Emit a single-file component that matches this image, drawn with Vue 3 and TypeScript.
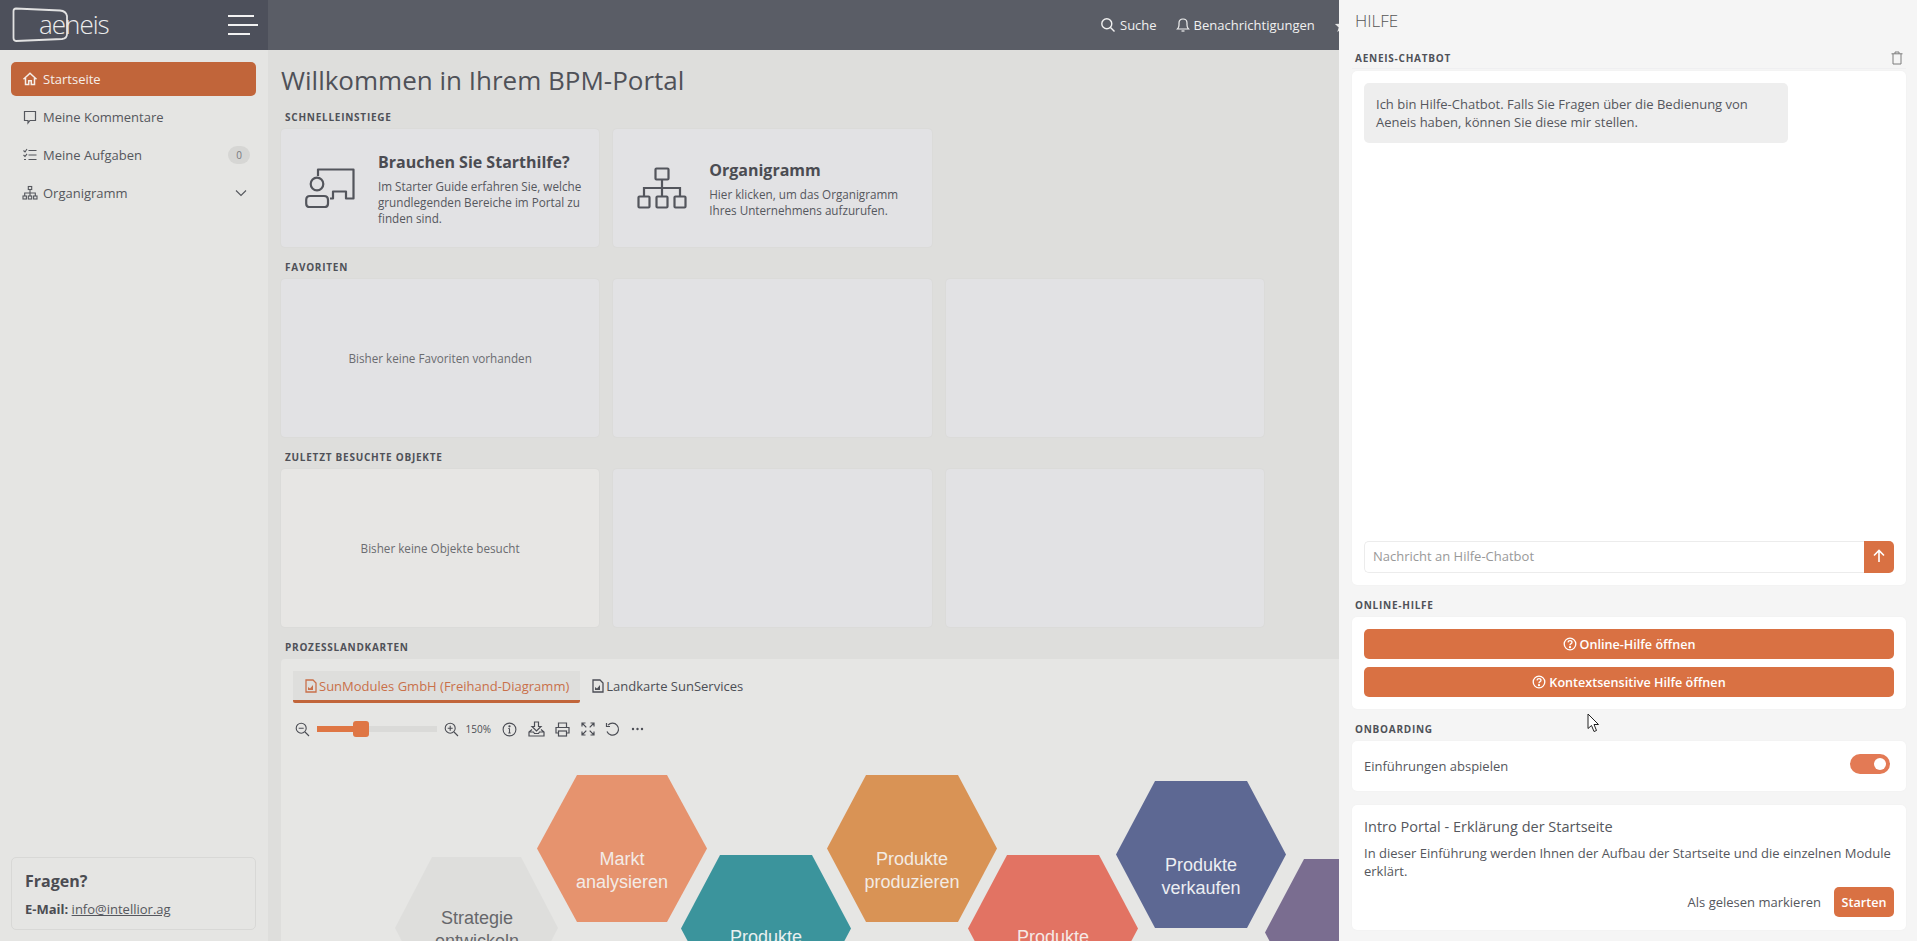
<template>
  <div class="app">
    <header class="topbar">
      <div class="brand">
        <div class="logo">
          <svg class="logo-frame" width="58" height="36" viewBox="0 0 58 36" fill="none">
            <path d="M4 1.5 L48 3.5 Q54 4 55 9 V27 Q55 31.5 50 32 L4 34 Q1.5 34 1.5 31 V4 Q1.5 1.5 4 1.5 Z" stroke="#e2e2e2" stroke-width="1.8" />
          </svg>
          <span class="logo-text">aeneis</span>
        </div>
        <div class="burger"><i class="b1"></i><i class="b2"></i><i class="b3"></i></div>
      </div>
      <nav class="topnav">
        <span class="nav-item">
          <svg width="16" height="16" viewBox="0 0 16 16" fill="none" stroke="#f0f0f0" stroke-width="1.4"><circle cx="6.8" cy="6.8" r="5" /><path d="M10.5 10.5 L14.5 14.5" /></svg>
          Suche
        </span>
        <span class="nav-item">
          <svg width="14" height="16" viewBox="0 0 14 16" fill="none" stroke="#f0f0f0" stroke-width="1.2"><path d="M1.5 12 Q3 10.5 3 8 V6 Q3 2 7 2 Q11 2 11 6 V8 Q11 10.5 12.5 12 Z" /><path d="M5.5 14 H8.5" /></svg>
          Benachrichtigungen
        </span>
        <span class="nav-item">
          <svg width="15" height="15" viewBox="0 0 16 16" fill="#e6e6e6"><path d="M8 1 L10 6 L15 6.5 L11 10 L12.5 15 L8 12 L3.5 15 L5 10 L1 6.5 L6 6 Z" /></svg>
        </span>
      </nav>
    </header>

    <aside class="sidebar">
      <ul class="menu">
        <li class="menu-item active">
          <svg width="16" height="16" viewBox="0 0 16 16" fill="none" stroke="currentColor" stroke-width="1.5"><path d="M1.5 8.2 L8 2.2 L14.5 8.2" /><path d="M3.5 7 V13.5 H6.7 V9.8 H9.3 V13.5 H12.5 V7" /></svg>
          <span>Startseite</span>
        </li>
        <li class="menu-item">
          <svg width="16" height="16" viewBox="0 0 16 16" fill="none" stroke="currentColor" stroke-width="1.2"><path d="M2.5 2.5 H13.5 V11.5 H8 L6 14 V11.5 H2.5 Z" /></svg>
          <span>Meine Kommentare</span>
        </li>
        <li class="menu-item">
          <svg width="16" height="16" viewBox="0 0 16 16" fill="none" stroke="currentColor" stroke-width="1.1"><path d="M1.5 3.5 L3 5 L5 2 M1.5 8 L3 9.5 L5 6.8 M2 12.5 H4 M6.5 3.5 H14.5 M6.5 8 H14.5 M6.5 12.5 H14.5" /></svg>
          <span>Meine Aufgaben</span>
          <em class="count">0</em>
        </li>
        <li class="menu-item">
          <svg width="16" height="16" viewBox="0 0 16 16" fill="none" stroke="currentColor" stroke-width="1.1"><rect x="6.3" y="1.5" width="3.4" height="3" /><rect x="1" y="11" width="3.4" height="3" /><rect x="6.3" y="11" width="3.4" height="3" /><rect x="11.6" y="11" width="3.4" height="3" /><path d="M8 4.5 V11 M2.7 11 V8 H13.3 V11" /></svg>
          <span>Organigramm</span>
          <svg class="chevron" width="12" height="12" viewBox="0 0 12 12" fill="none" stroke="currentColor" stroke-width="1.1"><path d="M1 3.5 L6 8.5 L11 3.5" /></svg>
        </li>
      </ul>
      <div class="questions">
        <h4>Fragen?</h4>
        <p><b>E-Mail:</b> <a>info@intellior.ag</a></p>
      </div>
    </aside>

    <main class="main">
      <h1>Willkommen in Ihrem BPM-Portal</h1>

      <section>
        <h5 class="label">SCHNELLEINSTIEGE</h5>
        <div class="tiles quick">
          <div class="tile quick-tile">
            <svg class="quick-icon" width="50" height="40" viewBox="0 0 50 40" fill="none" stroke="#53555c" stroke-width="2.2" stroke-linejoin="round">
              <path d="M13 8 V1.5 H48.5 V30.5 H41 V23.5 H28 V30.5 H25" />
              <circle cx="12" cy="16" r="6.3" />
              <path d="M4 39 Q1.2 39 1.2 35.5 V32 Q1.2 28 5 28 H19 Q23 28 23 32 V35.5 Q23 39 20 39 Z" />
            </svg>
            <div class="quick-text">
              <h3>Brauchen Sie Starthilfe?</h3>
              <p>Im Starter Guide erfahren Sie, welche grundlegenden Bereiche im Portal zu finden sind.</p>
            </div>
          </div>
          <div class="tile quick-tile org">
            <svg class="quick-icon" width="50" height="42" viewBox="0 0 50 42" fill="none" stroke="#53555c" stroke-width="2.2">
              <rect x="18.5" y="1.5" width="13" height="11" rx="1" />
              <rect x="1.5" y="29.5" width="11" height="11" rx="1" />
              <rect x="19.5" y="29.5" width="11" height="11" rx="1" />
              <rect x="37.5" y="29.5" width="11" height="11" rx="1" />
              <path d="M25 12.5 V29.5 M7 29.5 V21 H43 V29.5" />
            </svg>
            <div class="quick-text">
              <h3>Organigramm</h3>
              <p>Hier klicken, um das Organigramm Ihres Unternehmens aufzurufen.</p>
            </div>
          </div>
        </div>
      </section>

      <section>
        <h5 class="label">FAVORITEN</h5>
        <div class="tiles">
          <div class="tile big">Bisher keine Favoriten vorhanden</div>
          <div class="tile big"></div>
          <div class="tile big"></div>
        </div>
      </section>

      <section>
        <h5 class="label">ZULETZT BESUCHTE OBJEKTE</h5>
        <div class="tiles">
          <div class="tile big warm">Bisher keine Objekte besucht</div>
          <div class="tile big"></div>
          <div class="tile big"></div>
        </div>
      </section>

      <section>
        <h5 class="label tight">PROZESSLANDKARTEN</h5>
        <div class="maps">
          <div class="tabs">
            <div class="tab selected">
              <svg width="12" height="14" viewBox="0 0 12 14" fill="none" stroke="currentColor" stroke-width="1.3"><path d="M1 1 H8 L11 4 V13 H1 Z" /><path d="M3 11 V8 L5 9.5 L8 6 V11 Z" fill="currentColor" stroke="none" /></svg>
              SunModules GmbH (Freihand-Diagramm)
            </div>
            <div class="tab">
              <svg width="12" height="14" viewBox="0 0 12 14" fill="none" stroke="currentColor" stroke-width="1.3"><path d="M1 1 H8 L11 4 V13 H1 Z" /><path d="M3 11 V8 L5 9.5 L8 6 V11 Z" fill="currentColor" stroke="none" /></svg>
              Landkarte SunServices
            </div>
          </div>
          <div class="toolbar">
            <svg width="15" height="15" viewBox="0 0 15 15" fill="none" stroke="#4c4e55" stroke-width="1.1"><circle cx="6.2" cy="6.2" r="5" /><path d="M10 10 L14 14 M3.7 6.2 H8.7" /></svg>
            <div class="slider"><div class="slider-fill" :style="{ width: zoomPercent + '%' }"></div><div class="slider-thumb"></div></div>
            <svg width="15" height="15" viewBox="0 0 15 15" fill="none" stroke="#4c4e55" stroke-width="1.1"><circle cx="6.2" cy="6.2" r="5" /><path d="M10 10 L14 14 M3.7 6.2 H8.7 M6.2 3.7 V8.7" /></svg>
            <span class="zoom-value">150%</span>
            <svg width="15" height="15" viewBox="0 0 15 15" fill="none" stroke="#4c4e55" stroke-width="1.1"><circle cx="7.5" cy="7.5" r="6.4" /><path d="M7.5 6.5 V11 M6.3 11 H8.7 M6.3 6.5 H7.5" /><circle cx="7.5" cy="4.3" r=".6" fill="#4c4e55" /></svg>
            <svg width="17" height="16" viewBox="0 0 17 16" fill="none" stroke="#4c4e55" stroke-width="1.2"><path d="M6.5 1 H10.5 V5.5 H13 L8.5 10 L4 5.5 H6.5 Z" /><path d="M4 8.5 L1 11 V15 H16 V11 L13 8.5 M1 11 H5.5 L6.5 12.5 H10.5 L11.5 11 H16" /></svg>
            <svg width="15" height="15" viewBox="0 0 15 15" fill="none" stroke="#4c4e55" stroke-width="1.2"><path d="M3.5 5.5 V1 H11.5 V5.5 M3.5 11 H1 V5.5 H14 V11 H11.5" /><rect x="3.5" y="9" width="8" height="5" /></svg>
            <svg width="14" height="14" viewBox="0 0 14 14" fill="none" stroke="#4c4e55" stroke-width="1.2"><path d="M1 1 L5.3 5.3 M13 1 L8.7 5.3 M1 13 L5.3 8.7 M13 13 L8.7 8.7 M1 4.5 V1 H4.5 M9.5 1 H13 V4.5 M1 9.5 V13 H4.5 M9.5 13 H13 V9.5" /></svg>
            <svg width="15" height="15" viewBox="0 0 15 15" fill="none" stroke="#4c4e55" stroke-width="1.2"><path d="M3 3.2 A6 6 0 1 1 2 9.5" /><path d="M1.5 1 V4.5 H5" /></svg>
            <svg width="13" height="4" viewBox="0 0 13 4" fill="#4c4e55"><circle cx="2" cy="2" r="1.2" /><circle cx="6.5" cy="2" r="1.2" /><circle cx="11" cy="2" r="1.2" /></svg>
          </div>
          <svg class="map" viewBox="282 745 1500 196" width="1500" height="196">
            <g v-for="hex in hexagons" :key="hex.cx + '-' + hex.top">
              <polygon :points="hexPoints(hex)" :fill="hex.fill" />
              <text
                v-for="(line, i) in hex.lines"
                :key="line"
                :x="hex.cx"
                :y="hex.textY + i * 22.5"
                :fill="hex.ink"
                text-anchor="middle"
                class="map-text"
              >{{ line }}</text>
            </g>
          </svg>
        </div>
      </section>
    </main>

    <aside class="help">
      <h2>HILFE</h2>
      <div class="help-head">
        <h5 class="label">AENEIS-CHATBOT</h5>
        <svg width="12" height="14" viewBox="0 0 12 14" fill="none" stroke="#7d7d7d" stroke-width="1"><path d="M.5 2.8 H11.5 M2 2.8 V13 H10 V2.8 M4 2.8 V1 H8 V2.8" /></svg>
      </div>
      <div class="help-card chat">
        <div class="bubble">Ich bin Hilfe-Chatbot. Falls Sie Fragen über die Bedienung von Aeneis haben, können Sie diese mir stellen.</div>
        <div class="chat-input">
          <span class="placeholder">Nachricht an Hilfe-Chatbot</span>
          <button class="send">
            <svg width="14" height="14" viewBox="0 0 14 14" fill="none" stroke="#fff" stroke-width="1.6"><path d="M7 13 V1.5 M2 6.5 L7 1.5 L12 6.5" /></svg>
          </button>
        </div>
      </div>

      <h5 class="label help-label">ONLINE-HILFE</h5>
      <div class="help-card links">
        <button v-for="link in helpLinks" :key="link" class="wide-btn">
          <svg width="14" height="14" viewBox="0 0 14 14" fill="none" stroke="#fff" stroke-width="1.3"><circle cx="7" cy="7" r="5.8" /><path d="M5 5.4 Q5.2 3.6 7 3.6 Q9 3.6 9 5.2 Q9 6.3 7.8 6.8 Q7 7.2 7 8.3" /><circle cx="7" cy="10.2" r=".5" fill="#fff" /></svg>
          {{ link }}
        </button>
      </div>

      <h5 class="label help-label">ONBOARDING</h5>
      <div class="help-card toggle-row">
        <span>Einführungen abspielen</span>
        <div class="toggle"><i></i></div>
      </div>
      <div class="help-card intro">
        <h4>Intro Portal - Erklärung der Startseite</h4>
        <p>In dieser Einführung werden Ihnen der Aufbau der Startseite und die einzelnen Module erklärt.</p>
        <div class="intro-actions">
          <span>Als gelesen markieren</span>
          <button class="start">Starten</button>
        </div>
      </div>
    </aside>

    <svg class="cursor" width="13" height="20" viewBox="0 0 13 20"><path d="M1 1 V15.5 L4.5 12.5 L7 18.5 L9.5 17.5 L7 11.5 H11.5 Z" fill="#fff" stroke="#222" stroke-width="1" /></svg>
  </div>
</template>

<script setup lang="ts">
interface Hexagon {
  left: number
  right: number
  inset: number
  top: number
  height: number
  fill: string
  ink: string
  cx: number
  textY: number
  lines: string[]
}

const zoomPercent = 37

const helpLinks = ['Online-Hilfe öffnen', 'Kontextsensitive Hilfe öffnen']

const hexagons: Hexagon[] = [
  { left: 396, right: 559, inset: 37, top: 857, height: 142, fill: '#dededc', ink: '#66676b', cx: 478, textY: 924, lines: ['Strategie', 'entwickeln'] },
  { left: 538, right: 708, inset: 40, top: 775, height: 147, fill: '#e6936e', ink: '#f3ebe6', cx: 623, textY: 865, lines: ['Markt', 'analysieren'] },
  { left: 682, right: 852, inset: 39, top: 855, height: 147, fill: '#3b949c', ink: '#e9f0f0', cx: 767, textY: 943, lines: ['Produkte'] },
  { left: 828, right: 998, inset: 39, top: 775, height: 147, fill: '#d99355', ink: '#f3ebe3', cx: 913, textY: 865, lines: ['Produkte', 'produzieren'] },
  { left: 969, right: 1139, inset: 39, top: 855, height: 147, fill: '#e27363', ink: '#f5e9e6', cx: 1054, textY: 943, lines: ['Produkte'] },
  { left: 1117, right: 1287, inset: 39, top: 781, height: 147, fill: '#5d6893', ink: '#eceef2', cx: 1202, textY: 871, lines: ['Produkte', 'verkaufen'] },
  { left: 1266, right: 1436, inset: 39, top: 859, height: 147, fill: '#7a6d90', ink: '#eceef2', cx: 1351, textY: 950, lines: [] },
]

function hexPoints(h: Hexagon): string {
  const mid = h.top + h.height / 2
  return [
    [h.left + h.inset, h.top],
    [h.right - h.inset, h.top],
    [h.right, mid],
    [h.right - h.inset, h.top + h.height],
    [h.left + h.inset, h.top + h.height],
    [h.left, mid],
  ].map((p) => p.join(',')).join(' ')
}
</script>

<style>
html,
body {
  margin: 0;
  overflow: hidden;
}
</style>

<style scoped>
.app {
  position: relative;
  display: grid;
  grid-template-columns: 268px 1fr;
  grid-template-rows: 50px 1fr;
  height: 941px;
  overflow: hidden;
  font-family: "Open Sans", "Liberation Sans", sans-serif;
  font-size: 13px;
  color: #55575d;
  background: #dededc;
}

.topbar {
  grid-column: 1 / 3;
  display: flex;
  justify-content: space-between;
  background: #5a5d66;
  color: #f0f0f0;
}

.brand {
  display: flex;
  justify-content: space-between;
  align-items: center;
  width: 268px;
  padding: 0 10px 0 12px;
  box-sizing: border-box;
  background: #4d505b;
}

.logo {
  position: relative;
  width: 100px;
  height: 40px;
}

.logo-frame {
  position: absolute;
  left: 0;
  top: 2px;
}

.logo-text {
  position: absolute;
  left: 27px;
  top: 3px;
  font-size: 26px;
  line-height: 32px;
  font-weight: 300;
  letter-spacing: -1px;
  color: #ececec;
}

.burger {
  display: flex;
  flex-direction: column;
  gap: 7px;
  width: 30px;
}

.burger i {
  display: block;
  height: 2px;
  background: #f2f2f2;
}

.b1 { width: 26px; }
.b2 { width: 30px; }
.b3 { width: 22px; }

.topnav {
  position: absolute;
  left: 1100px;
  top: 0;
  display: flex;
  align-items: center;
  gap: 19px;
  height: 50px;
  white-space: nowrap;
}

.nav-item {
  display: flex;
  align-items: center;
  gap: 4px;
}

.sidebar {
  display: flex;
  flex-direction: column;
  justify-content: space-between;
  padding: 12px 12px 11px 11px;
  box-sizing: border-box;
  background: #e5e5e3;
  height: 891px;
}

.menu {
  display: flex;
  flex-direction: column;
  gap: 4px;
  margin: 0;
  padding: 0;
  list-style: none;
}

.menu-item {
  display: flex;
  align-items: center;
  gap: 5px;
  height: 34px;
  padding: 0 6px 0 11px;
  border-radius: 5px;
  color: #55575d;
}

.menu-item.active {
  background: #c1653a;
  color: #f5eee9;
}

.count {
  margin-left: auto;
  width: 22px;
  height: 18px;
  border-radius: 9px;
  background: #d6d6d4;
  font-size: 10px;
  font-style: normal;
  line-height: 18px;
  text-align: center;
  color: #77787c;
}

.chevron {
  margin-left: auto;
  margin-right: 3px;
}

.questions {
  width: 245px;
  height: 73px;
  padding: 12px 13px 0;
  box-sizing: border-box;
  border: 1px solid #d8d8d6;
  border-radius: 5px;
}

.questions h4 {
  margin: 0 0 8px;
  font-size: 16px;
  line-height: 22px;
  font-weight: 700;
  color: #4b4c52;
}

.questions p {
  margin: 0;
  line-height: 18px;
}

.questions b {
  color: #4b4c52;
}

.questions a {
  text-decoration: underline;
}

.main {
  height: 891px;
  padding: 11px 13px 0;
  box-sizing: border-box;
  overflow: hidden;
}

h1 {
  margin: 0 0 11px;
  font-size: 26px;
  line-height: 38px;
  font-weight: 400;
  color: #4f5158;
}

section {
  margin-bottom: 13px;
}

.label {
  margin: 0 0 5px 4px;
  font-size: 10px;
  line-height: 14px;
  font-weight: 700;
  letter-spacing: 0.75px;
  color: #4f5158;
}

.tiles {
  display: grid;
  grid-template-columns: repeat(3, 318.25px);
  gap: 14px;
}

.tile {
  border-radius: 4px;
  background: #e2e2e4;
  box-shadow: 0 0 2px rgba(0, 0, 0, 0.06);
}

.big {
  display: flex;
  align-items: center;
  justify-content: center;
  height: 158px;
  font-size: 11.7px;
  color: #6b6c70;
}

.warm {
  background: #e7e6e4;
}

.quick {
  grid-template-columns: 318.25px 318.25px;
}

.quick-tile {
  display: flex;
  align-items: center;
  gap: 23px;
  height: 118px;
  padding: 0 12px 0 24px;
  box-sizing: border-box;
  line-height: 16px;
}

.quick-tile.org {
  gap: 22px;
}

.quick-text {
  width: 207px;
}

.quick-tile h3 {
  margin: 0 0 4px;
  font-size: 16px;
  line-height: 24px;
  font-weight: 700;
  color: #4b4c52;
}

.quick-tile p {
  margin: 0;
  font-size: 11.7px;
  line-height: 16px;
}

.quick-icon {
  flex: none;
}

.maps {
  padding-top: 12px;
  height: 300px;
  border-radius: 4px;
  background: #e6e6e4;
  overflow: hidden;
}

.tabs {
  display: flex;
  gap: 9px;
  padding-left: 12px;
}

.tab {
  display: flex;
  align-items: center;
  gap: 2px;
  height: 29px;
  padding: 0 11px 3px 12px;
  color: #4c4e55;
  white-space: nowrap;
}

.tab.selected {
  background: #dededc;
  border-bottom: 3px solid #c1653a;
  border-radius: 0 0 2px 2px;
  color: #c9704a;
  padding-bottom: 0;
}

.tab + .tab {
  padding-left: 3px;
}

.toolbar {
  display: flex;
  align-items: center;
  height: 26px;
  margin-top: 13px;
  padding-left: 14px;
  gap: 10.5px;
}

.slider {
  position: relative;
  width: 120px;
  height: 6px;
  margin: 0 -3px 0 -4px;
  background: #dadad8;
}

.slider-fill {
  height: 100%;
  background: #df7644;
}

.slider-thumb {
  position: absolute;
  left: 36px;
  top: -5px;
  width: 16px;
  height: 16px;
  border-radius: 3px;
  background: #df7644;
}

.zoom-value {
  font-size: 10px;
  width: 26px;
  margin-left: -4px;
  color: #4c4e55;
}

.map {
  display: block;
  margin-top: 3px;
}

.map-text {
  font-family: "Liberation Sans", Arial, sans-serif;
  font-size: 18px;
}

.help {
  position: absolute;
  right: 0;
  top: 0;
  width: 578px;
  height: 941px;
  padding: 0 11px 0 13px;
  box-sizing: border-box;
  background: #f5f5f5;
}

h2 {
  margin: 0;
  padding: 10px 0 0 3px;
  font-size: 17px;
  line-height: 22px;
  font-weight: 300;
  color: #555;
}

.help-head {
  display: flex;
  justify-content: space-between;
  align-items: center;
  margin-top: 19px;
  height: 14px;
  padding: 0 3px 3px 0;
  border-bottom: 1px solid #efeff1;
}

.help-head .label {
  margin: 0 0 0 3px;
}

.help-label {
  margin: 13px 0 5px 3px;
}

.help-card {
  box-sizing: border-box;
  border-radius: 5px;
  background: #fff;
  box-shadow: 0 0 2px rgba(0, 0, 0, 0.04);
}

.chat {
  display: flex;
  flex-direction: column;
  justify-content: space-between;
  height: 514px;
  margin-top: 2px;
  padding: 12px 12px 12px;
}

.bubble {
  width: 424px;
  height: 60px;
  padding: 12px;
  box-sizing: border-box;
  border-radius: 5px;
  background: #eeeeee;
  line-height: 18px;
}

.chat-input {
  display: flex;
  height: 30px;
  border: 1px solid #ececec;
  border-right: none;
  border-radius: 5px;
}

.placeholder {
  flex: 1;
  padding-left: 8px;
  line-height: 28px;
  color: #999;
}

.send {
  width: 30px;
  margin: -1px 0;
  padding: 0;
  border: none;
  border-radius: 0 5px 5px 0;
  background: #d97143;
}

.links {
  display: flex;
  flex-direction: column;
  gap: 8px;
  height: 92px;
  padding: 12px;
}

.wide-btn {
  display: flex;
  align-items: center;
  justify-content: center;
  gap: 3px;
  height: 30px;
  padding: 0;
  border: none;
  border-radius: 5px;
  background: #d97143;
  color: #fff;
  font: 600 12.6px "Open Sans", "Liberation Sans", sans-serif;
}

.toggle-row {
  display: flex;
  align-items: center;
  justify-content: space-between;
  height: 50px;
  padding: 0 16px 0 12px;
}

.toggle {
  position: relative;
  width: 40px;
  height: 20px;
  margin-top: -4px;
  border-radius: 10px;
  background: #e37a55;
}

.toggle i {
  position: absolute;
  right: 4px;
  top: 4px;
  width: 12px;
  height: 12px;
  border-radius: 50%;
  background: #fff;
}

.intro {
  height: 125px;
  margin-top: 14px;
  padding: 12px;
}

.intro h4 {
  margin: 0 0 7px;
  font-size: 14.5px;
  line-height: 20px;
  font-weight: 400;
}

.intro p {
  margin: 0;
  line-height: 18px;
}

.intro-actions {
  display: flex;
  justify-content: flex-end;
  align-items: center;
  gap: 13px;
  margin-top: 7px;
}

.start {
  width: 60px;
  height: 30px;
  padding: 0;
  border: none;
  border-radius: 5px;
  background: #d97143;
  color: #fff;
  font: 600 12.6px "Open Sans", "Liberation Sans", sans-serif;
}

.cursor {
  position: absolute;
  left: 1587px;
  top: 713px;
}
</style>
